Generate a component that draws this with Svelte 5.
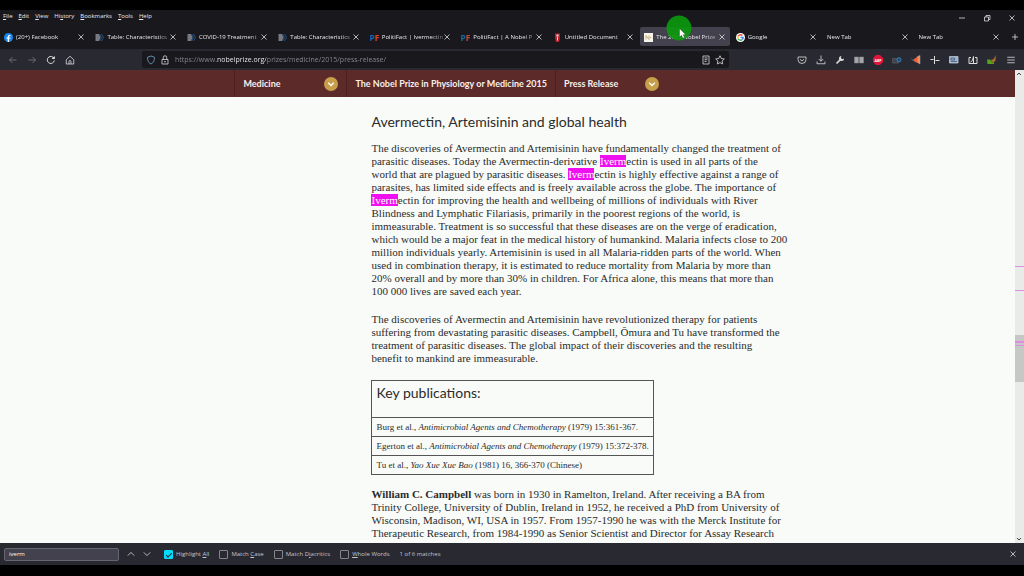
<script lang="ts">
  type Tab = { title: string; icon?: string; active?: boolean };

  const menus = [
    ["", "F", "ile"],
    ["", "E", "dit"],
    ["", "V", "iew"],
    ["Hi", "s", "tory"],
    ["", "B", "ookmarks"],
    ["", "T", "ools"],
    ["", "H", "elp"],
  ];

  const tabs: Tab[] = [
    { title: "(20+) Facebook", icon: "facebook" },
    { title: "Table: Characteristics", icon: "nih" },
    { title: "COVID-19 Treatment", icon: "nih" },
    { title: "Table: Characteristics", icon: "nih" },
    { title: "PolitiFact | Ivermectin", icon: "pf" },
    { title: "PolitiFact | A Nobel P", icon: "pf" },
    { title: "Untitled Document", icon: "doc" },
    { title: "The 2015 Nobel Prize", icon: "nobel", active: true },
    { title: "Google", icon: "google" },
    { title: "New Tab" },
    { title: "New Tab" },
  ];

  const extensions = [
    "pocket",
    "download",
    "wrench",
    "book",
    "abp",
    "camera",
    "megaphone",
    "plus",
    "card",
    "share",
    "duck",
    "menu",
  ];

  const publications = [
    ["Burg et al., ", "Antimicrobial Agents and Chemotherapy", " (1979) 15:361-367."],
    ["Egerton et al., ", "Antimicrobial Agents and Chemotherapy", " (1979) 15:372-378."],
    ["Tu et al., ", "Yao Xue Xue Bao", " (1981) 16, 366-370 (Chinese)"],
  ];

  // search hits on the scrollbar, in percent of the track
  const hits = [41.4, 46.5, 57.2, 57.4, 58.2];

  let url = $state("https://www.nobelprize.org/prizes/medicine/2015/press-release/");
  let query = $state("iverm");
  let options = $state([
    { id: "all", before: "Highlight ", key: "A", after: "ll", checked: true },
    { id: "case", before: "Match ", key: "C", after: "ase", checked: false },
    { id: "diacritics", before: "Match D", key: "i", after: "acritics", checked: false },
    { id: "words", before: "", key: "W", after: "hole Words", checked: false },
  ]);
</script>

{#snippet cross()}
  <svg class="cross" viewBox="0 0 8 8"><path d="M1.5 1.5l5 5m0-5l-5 5" /></svg>
{/snippet}

{#snippet chevron()}
  <svg viewBox="0 0 14 14">
    <circle cx="7" cy="7" r="7" fill="#c79f4b" />
    <path d="M4.2 5.8L7 8.5l2.8-2.7" fill="none" stroke="#fff" stroke-width="1.3" />
  </svg>
{/snippet}

{#snippet favicon(name: string)}
  <svg class="favicon" viewBox="0 0 18 18">
    {#if name === "facebook"}
      <circle cx="9" cy="9" r="9" fill="#1688ef" />
      <path d="M7.4 18v-6.4H5V9h2.4V7.2C7.4 4.6 9 3.4 13 3.9v2.3c-2-.2-2.8.1-2.8 1.5V9h2.7l-.5 2.6h-2.2V18z" fill="#fff" />
    {:else if name === "nih"}
      <path d="M1 2h7l3 7-3 7H1z" fill="#777a80" />
      <path d="M9 2l4 7-4 7M13 2l4 7-4 7" fill="none" stroke="#285a92" stroke-width="1.8" />
    {:else if name === "pf"}
      <text x="-1" y="16" fill="#1765b0">P</text>
      <text x="9" y="16" fill="#d1432c">F</text>
    {:else if name === "doc"}
      <path d="M4 1h10v10l-2 7H6l-2-7z" fill="#b8202a" />
      <path d="M7 3h4v4H7zM8 8h2v7H8z" fill="#ddd" />
    {:else if name === "nobel"}
      <path d="M0 0h18v18H0z" fill="#f7f4ec" />
      <path d="M4 13V5l6 8V5M12 9h3" fill="none" stroke="#c2a264" stroke-width="1.6" />
    {:else if name === "google"}
      <circle cx="9" cy="9" r="9" fill="#fff" />
      <g fill="none" stroke-width="2.6">
        <path d="M4.4 6.2A5.4 5.4 0 0 1 12.8 5" stroke="#ea4335" />
        <path d="M4.4 6.2a5.4 5.4 0 0 0 0 5.6" stroke="#fbbc05" />
        <path d="M4.4 11.8a5.4 5.4 0 0 0 8.2 1.3" stroke="#34a853" />
        <path d="M12.6 13.1A5 5 0 0 0 14.4 9H9" stroke="#4285f4" />
      </g>
    {/if}
  </svg>
{/snippet}

{#snippet tool(name: string)}
  <svg class="tool" viewBox="0 0 20 20">
    {#if name === "back"}
      <path d="M17 10H3m6-6l-6 6 6 6" />
    {:else if name === "forward"}
      <path d="M3 10h14m-6-6l6 6-6 6" />
    {:else if name === "reload"}
      <path d="M16.5 11A7 7 0 1 1 14 4.5l2 2" stroke-width="2" />
      <path d="M17.5 2v6h-6z" fill="#eee" stroke="none" />
    {:else if name === "home"}
      <path d="M2.5 9.5L10 2.5l7.5 7V18h-15zM8 18v-5a2 2 0 0 1 4 0v5" />
    {:else if name === "shield"}
      <path d="M10 2l7 2.5c0 7-2 11-7 13.5-5-2.5-7-6.5-7-13.5z" stroke="#76a9cc" />
    {:else if name === "lock"}
      <path d="M4 9h12v9H4zM6.5 9V5a3.5 3.5 0 0 1 7 0v4M8 13.5h4" />
    {:else if name === "reader"}
      <path d="M4 2h12v16H4zM7 6h6M7 9.5h6M7 13h4" />
    {:else if name === "star"}
      <path d="M10 1.5l2.6 5.6 6 .7-4.400 4.2 1.1 6L10 15.2 4.7 18l1.1-6L1.4 7.8l6-.7z" />
    {:else if name === "pocket"}
      <path d="M2 4h16v5a8 8 0 0 1-16 0zM6 8.5l4 3.5 4-3.5" />
    {:else if name === "download"}
      <path d="M10 1v11M5.5 8l4.5 4.5L14.5 8M2 13v4.5h16V13" />
    {:else if name === "wrench"}
      <path d="M3 17l8-8" stroke-width="3.5" />
      <path d="M13 2a5 5 0 1 0 5 5l-3.5 1.5-3-3z" fill="#ddd" stroke="none" />
    {:else if name === "book"}
      <path d="M1 4h8v12H1zM11 4h8v12h-8z" fill="#a5a5aa" stroke="#8c8c92" stroke-width="1" />
    {:else if name === "abp"}
      <path d="M6 0h8l6 6v8l-6 6H6l-6-6V6z" fill="#e1143c" stroke="none" />
      <text x="10" y="13" text-anchor="middle" fill="#fff">ABP</text>
    {:else if name === "camera"}
      <path d="M1 7h12v9H1z" fill="#41434a" stroke="#565962" />
      <circle cx="14" cy="9.5" r="4" fill="#22435c" stroke="#3187c6" stroke-width="2" />
    {:else if name === "megaphone"}
      <path d="M5 9l8-6v13l-8-4z" fill="#e86435" stroke="none" />
      <path d="M13 3l5-2v17l-5-3z" fill="#f08a5e" stroke="#b7a7a2" stroke-width="1" />
      <path d="M1 7l4 5" stroke="#3269a0" stroke-width="2" />
    {:else if name === "plus"}
      <path d="M9 2v16M1 9h6M11 11h8" stroke-width="2" />
    {:else if name === "card"}
      <path d="M1 3h17v13H1z" fill="#9eb3cb" stroke="#bdc5d1" />
      <path d="M4 6h7v4H4zM4 13h12" stroke="#3f5877" />
    {:else if name === "share"}
      <path d="M6 5H2v12h16V5h-4" stroke-width="2" />
      <path d="M5 14l4-3 2-8v14" stroke-width="2" />
    {:else if name === "duck"}
      <path d="M0 9h6l3 4 4-2 1 7H1z" fill="#57a51e" stroke="none" />
      <path d="M7 10l5-1 6-8-1 10-5 5z" fill="#a87335" stroke="#70491e" stroke-width="1" />
    {:else if name === "menu"}
      <path d="M2.5 4.5h15M2.5 10h15M2.5 15.5h15" />
    {:else if name === "up"}
      <path d="M2 14l8-8 8 8" />
    {:else if name === "down"}
      <path d="M2 6l8 8 8-8" />
    {/if}
  </svg>
{/snippet}

<div class="browser">
  <header>
    <div class="menubar">
      <nav>
        {#each menus as [before, key, after]}
          <button>{before}<u>{key}</u>{after}</button>
        {/each}
      </nav>
      <div class="window-buttons">
        <button aria-label="Minimize"><svg viewBox="0 0 8 8"><path d="M1 4h6" /></svg></button>
        <button aria-label="Restore">
          <svg viewBox="0 0 8 8"><path d="M1.5 3h4v4h-4zM3 3V1.5h4v4H5.5" /></svg>
        </button>
        <button aria-label="Close">{@render cross()}</button>
      </div>
    </div>

    <div class="tabstrip">
      {#each tabs as tab}
        <div class="tab" class:active={tab.active}>
          {#if tab.icon}{@render favicon(tab.icon)}{/if}
          <button class="title">{tab.title}</button>
          <button aria-label="Close tab">{@render cross()}</button>
        </div>
      {/each}
      <button class="new-tab" aria-label="New tab">
        <svg viewBox="0 0 8 8"><path d="M4 1v6M1 4h6" /></svg>
      </button>
    </div>

    <div class="toolbar">
      <div class="history">
        <button class="dim" aria-label="Back">{@render tool("back")}</button>
        <button class="dim" aria-label="Forward">{@render tool("forward")}</button>
        <button aria-label="Reload">{@render tool("reload")}</button>
        <button aria-label="Home">{@render tool("home")}</button>
      </div>
      <div class="address">
        {@render tool("shield")}
        {@render tool("lock")}
        <input aria-label="Address" type="text" spellcheck="false" bind:value={url} />
        <button aria-label="Reader view">{@render tool("reader")}</button>
        <button aria-label="Bookmark">{@render tool("star")}</button>
      </div>
      <div class="extensions">
        {#each extensions as name}
          <button aria-label={name}>{@render tool(name)}</button>
        {/each}
      </div>
    </div>

    <div class="pointer">
      <svg viewBox="0 0 26 26">
        <circle cx="13" cy="13" r="12.5" fill="#0a9a0c" fill-opacity="0.9" />
        <path d="M13.5 13.5v8.5l2-1.7 1.3 3 1.7-.8-1.3-2.8h2.6z" fill="#fff" stroke="#333" stroke-width=".4" />
      </svg>
    </div>
  </header>

  <div class="viewport">
    <div class="page">
      <nav class="crumbs">
        <div class="crumb picker">
          <a href="#medicine">Medicine</a>
          <button aria-label="Show prizes">{@render chevron()}</button>
        </div>
        <div class="crumb">
          <a href="#prize">The Nobel Prize in Physiology or Medicine 2015</a>
        </div>
        <div class="crumb picker">
          <a href="#press">Press Release</a>
          <button aria-label="Show sections">{@render chevron()}</button>
        </div>
      </nav>

      <article>
        <h2>Avermectin, Artemisinin and global health</h2>
        <p>
          The discoveries of Avermectin and Artemisinin have fundamentally changed the treatment of<br />
          parasitic diseases. Today the Avermectin-derivative <mark>Iverm</mark>ectin is used in all parts of the<br />
          world that are plagued by parasitic diseases. <mark>Iverm</mark>ectin is highly effective against a range of<br />
          parasites, has limited side effects and is freely available across the globe. The importance of<br />
          <mark>Iverm</mark>ectin for improving the health and wellbeing of millions of individuals with River<br />
          Blindness and Lymphatic Filariasis, primarily in the poorest regions of the world, is<br />
          immeasurable. Treatment is so successful that these diseases are on the verge of eradication,<br />
          which would be a major feat in the medical history of humankind. Malaria infects close to 200<br />
          million individuals yearly. Artemisinin is used in all Malaria-ridden parts of the world. When<br />
          used in combination therapy, it is estimated to reduce mortality from Malaria by more than<br />
          20% overall and by more than 30% in children. For Africa alone, this means that more than<br />
          100 000 lives are saved each year.
        </p>
        <p>
          The discoveries of Avermectin and Artemisinin have revolutionized therapy for patients<br />
          suffering from devastating parasitic diseases. Campbell, Ōmura and Tu have transformed the<br />
          treatment of parasitic diseases. The global impact of their discoveries and the resulting<br />
          benefit to mankind are immeasurable.
        </p>
        <table>
          <thead>
            <tr><th>Key publications:</th></tr>
          </thead>
          <tbody>
            {#each publications as [authors, journal, issue]}
              <tr><td>{authors}<em>{journal}</em>{issue}</td></tr>
            {/each}
          </tbody>
        </table>
        <p>
          <strong>William C. Campbell</strong> was born in 1930 in Ramelton, Ireland. After receiving a BA from<br />
          Trinity College, University of Dublin, Ireland in 1952, he received a PhD from University of<br />
          Wisconsin, Madison, WI, USA in 1957. From 1957-1990 he was with the Merck Institute for<br />
          Therapeutic Research, from 1984-1990 as Senior Scientist and Director for Assay Research
        </p>
      </article>
    </div>

    <div class="scrollbar">
      <svg viewBox="0 0 8 8"><path d="M2 5l2-2 2 2" /></svg>
      <div class="thumb"></div>
      {#each hits as hit}
        <div class="hit" style="top: {hit}%"></div>
      {/each}
      <svg viewBox="0 0 8 8"><path d="M2 3l2 2 2-2" /></svg>
    </div>
  </div>

  <footer>
    <input class="query" type="text" aria-label="Find in page" spellcheck="false" bind:value={query} />
    <div class="steps">
      <button aria-label="Previous">{@render tool("up")}</button>
      <button aria-label="Next">{@render tool("down")}</button>
    </div>
    {#each options as option}
      <label for={option.id}>
        <input id={option.id} type="checkbox" bind:checked={option.checked} />
        <span>{option.before}<u>{option.key}</u>{option.after}</span>
      </label>
    {/each}
    <output>1 of 6 matches</output>
    <button class="close" aria-label="Close find bar">{@render cross()}</button>
  </footer>
</div>

<style>
  :global(body) {
    margin: 0;
    background: #000;
  }

  .browser {
    box-sizing: border-box;
    height: 100vh;
    padding: 10px 0 11px;
    display: flex;
    flex-direction: column;
    background: #000;
    color: #e8e8ec;
    font: 6px/10px "Open Sans", "Noto Sans", sans-serif;
  }

  button,
  input {
    margin: 0;
    padding: 0;
    border: none;
    background: none;
    color: inherit;
    font: inherit;
  }

  button {
    display: flex;
    align-items: center;
    white-space: pre;
  }

  svg {
    display: block;
    flex: none;
    width: 8px;
    height: 8px;
    fill: none;
    stroke: #ddd;
    stroke-width: 0.8;
  }

  u {
    text-underline-offset: 1px;
  }

  header {
    position: relative;
    background: #18181d;
  }

  .menubar {
    display: flex;
    justify-content: space-between;
    height: 14px;
  }

  .menubar nav {
    display: flex;
    align-items: center;
    gap: 6px;
    height: 12px;
    padding-left: 3px;
  }

  .window-buttons {
    display: flex;
    align-items: center;
    gap: 17px;
    padding: 2px 8px 0 0;
  }

  .tabstrip {
    display: flex;
    height: 25px;
    padding-top: 3px;
    box-sizing: border-box;
  }

  .tab {
    flex: 1;
    min-width: 0;
    box-sizing: border-box;
    display: flex;
    align-items: center;
    height: 19px;
    margin-right: 2px;
    padding: 1px 4px 0 4px;
    border-radius: 2px;
  }

  .tab.active {
    background-color: #42414d;
  }

  .favicon {
    width: 9px;
    height: 9px;
    margin-right: 3px;
    stroke: none;
  }

  .favicon text {
    font: bold 17px "Open Sans", sans-serif;
  }

  .title {
    flex: 1;
    min-width: 0;
    mask-image: linear-gradient(to right, #000 80%, transparent 110%);
  }

  .new-tab {
    width: 18px;
    height: 19px;
    justify-content: center;
  }

  .toolbar {
    display: flex;
    align-items: center;
    height: 21px;
    background: #292932;
  }

  .history {
    display: flex;
    gap: 9px;
    padding: 0 67px 0 8px;
  }

  .tool {
    width: 10px;
    height: 10px;
    stroke: #ddd;
    stroke-width: 1.6;
  }

  .tool text {
    font: bold 7px "Open Sans", sans-serif;
    stroke: none;
  }

  .dim {
    opacity: 0.45;
  }

  .address {
    flex: 1;
    display: flex;
    align-items: center;
    gap: 4px;
    height: 17px;
    padding: 0 4px;
    border-radius: 2px;
    background: #18181d;
  }

  .address input {
    flex: 1;
    min-width: 0;
    margin-left: 1px;
    font-size: 7px;
    line-height: 12px;
    color: transparent;
    caret-color: #fff;
    /* only the host part of the address is bright */
    background: linear-gradient(to right, #8a8a92 42px, #fbfbfe 42px 91px, #8a8a92 91px);
    -webkit-background-clip: text;
    background-clip: text;
    outline: none;
  }

  .extensions {
    display: flex;
    gap: 9px;
    padding: 0 8px 0 68px;
  }

  .pointer {
    position: absolute;
    top: 5px;
    left: 65%;
  }

  .pointer svg {
    width: 26px;
    height: 26px;
    stroke: none;
  }

  .viewport {
    flex: 1;
    min-height: 0;
    display: flex;
    background: #f9fbf8;
  }

  .page {
    flex: 1;
    min-width: 0;
    overflow: hidden;
    color: #2b2b2b;
  }

  .crumbs {
    display: flex;
    height: 27px;
    padding-left: 23.1%;
    background: #5c2a28;
    font: bold 9px/14px Lato, sans-serif;
  }

  .crumb {
    box-sizing: border-box;
    display: flex;
    align-items: center;
    justify-content: space-between;
    padding: 0 8px;
    border-left: 1px solid #4b2120;
  }

  .picker {
    width: 112px;
  }

  .crumb a {
    color: #f7efec;
    text-decoration: none;
  }

  .crumb svg {
    width: 14px;
    height: 14px;
    stroke: none;
  }

  article {
    padding: 15px 0 0 36.6%;
    font: 11px/13px "Liberation Serif", serif;
    white-space: nowrap;
  }

  h2,
  th {
    font: 14px/20px Lato, sans-serif;
  }

  h2 {
    margin: 0 0 10px;
  }

  p {
    margin: 0 0 15px;
  }

  mark {
    background: #ef0fef;
    color: #fff;
  }

  table {
    margin-bottom: 13px;
    border-collapse: collapse;
  }

  th,
  td {
    padding: 3px 4px;
    border: 1px solid #555;
    text-align: left;
  }

  td {
    font: 9px/12px "Liberation Serif", serif;
  }

  th {
    padding: 2px 4px 14px;
  }

  .scrollbar {
    position: relative;
    width: 9px;
    display: flex;
    flex-direction: column;
    justify-content: space-between;
    background: #e9ebe9;
  }

  .scrollbar svg {
    stroke: #444;
    stroke-width: 1;
  }

  .thumb {
    position: absolute;
    top: 56%;
    width: 100%;
    height: 10%;
    background: #c6c8c6;
  }

  .hit {
    position: absolute;
    width: 100%;
    height: 1px;
    background: #e08be4;
  }

  footer {
    display: flex;
    align-items: center;
    height: 22px;
    background: #292932;
    color: #c4c4cc;
  }

  .query {
    box-sizing: border-box;
    width: 115px;
    height: 13px;
    margin-left: 4px;
    padding: 0 4px;
    border: 1px solid #666672;
    border-radius: 2px;
    background: #42414d;
    color: #fbfbfe;
  }

  .steps {
    display: flex;
    gap: 8px;
    padding: 0 13px 0 8px;
  }

  .steps .tool {
    width: 8px;
    height: 8px;
    stroke-width: 2;
  }

  label {
    display: flex;
    align-items: center;
    gap: 3px;
    margin-right: 10px;
  }

  label input {
    appearance: none;
    box-sizing: border-box;
    display: grid;
    place-items: center;
    width: 9px;
    height: 9px;
    border: 1px solid #85858f;
    border-radius: 1px;
  }

  label input:checked {
    border-color: #00ddff;
    background: #00ddff;
  }

  label input:checked::after {
    content: "";
    width: 5px;
    height: 2px;
    border: solid #2b2a33;
    border-width: 0 0 1px 1px;
    transform: rotate(-45deg);
  }

  footer .close {
    margin: 0 7px 0 auto;
  }
</style>
